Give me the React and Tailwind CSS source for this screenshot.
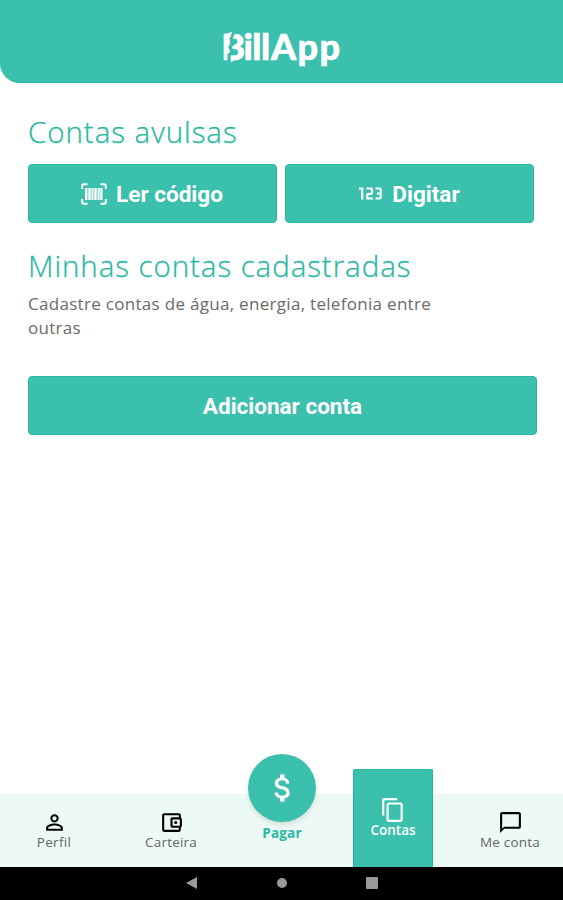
import React from "react";
import {
  MdAttachMoney,
  MdChatBubbleOutline,
  MdContentCopy,
  MdOutlineAccountBalanceWallet,
  MdPersonOutline,
} from "react-icons/md";

function Logo() {
  return (
    <svg className="block h-[62px] w-[130px]" viewBox="0 0 130 62" role="img" aria-label="BillApp">
      <text
        x="4.300 26.500 35.300 44 54 80.500 102.500"
        y="46"
        fill="#fff"
        stroke="#fff"
        strokeWidth="0.600"
        fontFamily="Lato, 'Liberation Sans', sans-serif"
        fontWeight="900"
        fontSize="36"
      >
        BillApp
      </text>
      <path d="M17.500 17 L14 24 L16.500 29 L13 33 L15.500 38 L12 41 L12 49" fill="none" stroke="#3bc0ae" strokeWidth="3.200" />
      <path d="M8 20 L15 18 L13.500 23 L10 25 Z M14 45 L18.500 45 L14 48.500 Z" fill="#fff" />
    </svg>
  );
}

function BarcodeIcon() {
  return (
    <svg className="h-[22px] w-[26px] shrink-0" viewBox="0 0 26 22" fill="none" stroke="#fff">
      <path strokeWidth="2" d="M1.200 6V3q0-1.800 1.800-1.800h3.500M19.500 1.200H23q1.800 0 1.800 1.800v3M1.200 16v3q0 1.800 1.800 1.800h3.500M19.500 20.800H23q1.800 0 1.800-1.800v-3" />
      <path strokeWidth="2" d="M5 5v12M8.500 5v12M14.500 5v12M20.500 5v12" />
      <path strokeWidth="1.400" d="M11.500 5v12M17.700 5v12" />
      <path strokeWidth="16" strokeOpacity="0.45" d="M13 5v12" />
    </svg>
  );
}

function DigitsIcon() {
  return (
    <svg className="h-[13px] w-[23px] shrink-0" viewBox="0 0 23 13" fill="none" stroke="#fff" strokeWidth="2.200">
      <path d="M0 1.500h3.200V12.500M7.500 1.500h4.500q1 0 1 1V6q0 .8-1 .8H9.300q-1 0-1 1v3.700H14M16.500 1.500h4q1.200 0 1.200 1v8q0 1-1.200 1h-4M18 6.500h3.500" />
    </svg>
  );
}

const BUTTON =
  "flex h-[59px] items-center justify-center rounded-[4px] border border-[#27b5a1] bg-[#3bc0ae] font-[Roboto,sans-serif] text-[22.5px] font-bold text-white";

function NavItem({ icon: Icon, label, className, size = 25 }) {
  return (
    <div className={"flex flex-col items-center " + className}>
      <Icon size={size} className="shrink-0" />
      <span className="-mt-px text-[13.5px] leading-[16px] whitespace-nowrap">{label}</span>
    </div>
  );
}

export default function App() {
  return (
    <div className="flex h-[900px] w-[563px] flex-col overflow-hidden bg-white font-['Open_Sans',sans-serif]">
      <header className="flex h-[83px] shrink-0 justify-center rounded-bl-[20px] border-b border-[#27b5a1] bg-[#3bc0ae] pt-[14px]">
        <Logo />
      </header>

      <main className="flex grow flex-col px-[28px] text-[#29b8a3]">
        <h1 className="mt-[29px] h-[40px] text-[29.500px] leading-[40px] font-light tracking-[0.950px] whitespace-nowrap [-webkit-text-stroke:0.3px_#29b8a3]">Contas avulsas</h1>
        <div className="mt-[12px] flex gap-[7.500px]">
          <button className={BUTTON + " w-[249px] shrink-0 gap-[9px] pr-[1px]"}>
            <BarcodeIcon />
            <span className="mt-[2px]">Ler código</span>
          </button>
          <button className={BUTTON + " w-[249px] shrink-0 gap-[10px] pl-[1px]"}>
            <DigitsIcon />
            <span className="mt-[2px]">Digitar</span>
          </button>
        </div>
        <h2 className="mt-[23px] h-[40px] text-[29.500px] leading-[40px] font-light tracking-[0.930px] whitespace-nowrap [-webkit-text-stroke:0.3px_#29b8a3]">Minhas contas cadastradas</h2>
        <p className="mt-[6px] h-[48px] text-[17px] leading-[24px] tracking-[0.300px] text-[#6a6a6a]">
          Cadastre contas de água, energia, telefonia entre
          <br />
          outras
        </p>
        <button className={BUTTON + " mt-[36px] w-[509px]"}>
          <span className="mt-[2px]">Adicionar conta</span>
        </button>
      </main>

      <nav className="flex h-[73px] shrink-0 items-start bg-[#ecf9f5] text-[#666]">
        <NavItem icon={MdPersonOutline} label="Perfil" className="w-[108px] shrink-0 pt-[16px] tracking-[0.3px] [&>svg]:text-black" />
        <NavItem icon={MdOutlineAccountBalanceWallet} label="Carteira" className="w-[126px] shrink-0 pt-[16px] tracking-[0.2px] [&>svg]:text-black" />
        <div className="-mt-[40px] ml-[14px] flex w-[68px] shrink-0 flex-col items-center">
          <div className="flex size-[68px] items-center justify-center rounded-full bg-[#3bc0ae] text-white shadow-[0_3px_5px_rgba(0,0,0,0.10)]">
            <MdAttachMoney size={36} className="ml-[1px]" />
          </div>
          <span className="mt-[2px] text-[13.500px] leading-[18px] font-bold tracking-[0.2px] text-[#29b8a3]">Pagar</span>
        </div>
        <div className="-mt-[25px] ml-[37px] h-[98px] w-[80px] shrink-0 rounded-t-[2px] border-x border-t border-[#27b5a1] bg-[#3bc0ae] text-white">
          <NavItem icon={MdContentCopy} label="Contas" size={26} className="pt-[27px] font-semibold" />
        </div>
        <NavItem icon={MdChatBubbleOutline} label="Me conta" className="ml-[24px] w-[106px] shrink-0 pt-[16px] tracking-[0.2px] [&>svg]:text-black" />
      </nav>

      <footer className="flex h-[33px] shrink-0 items-center bg-black pb-[1px] pl-[186px]">
        <svg className="h-[12px] w-[11px]" viewBox="0 0 11 12">
          <path d="M0 6 11 0v12z" fill="#999" />
        </svg>
        <span className="ml-[80px] size-[10px] rounded-full bg-[#999]" />
        <span className="ml-[79px] size-[12px] rounded-[1px] bg-[#999]" />
      </footer>
    </div>
  );
}
